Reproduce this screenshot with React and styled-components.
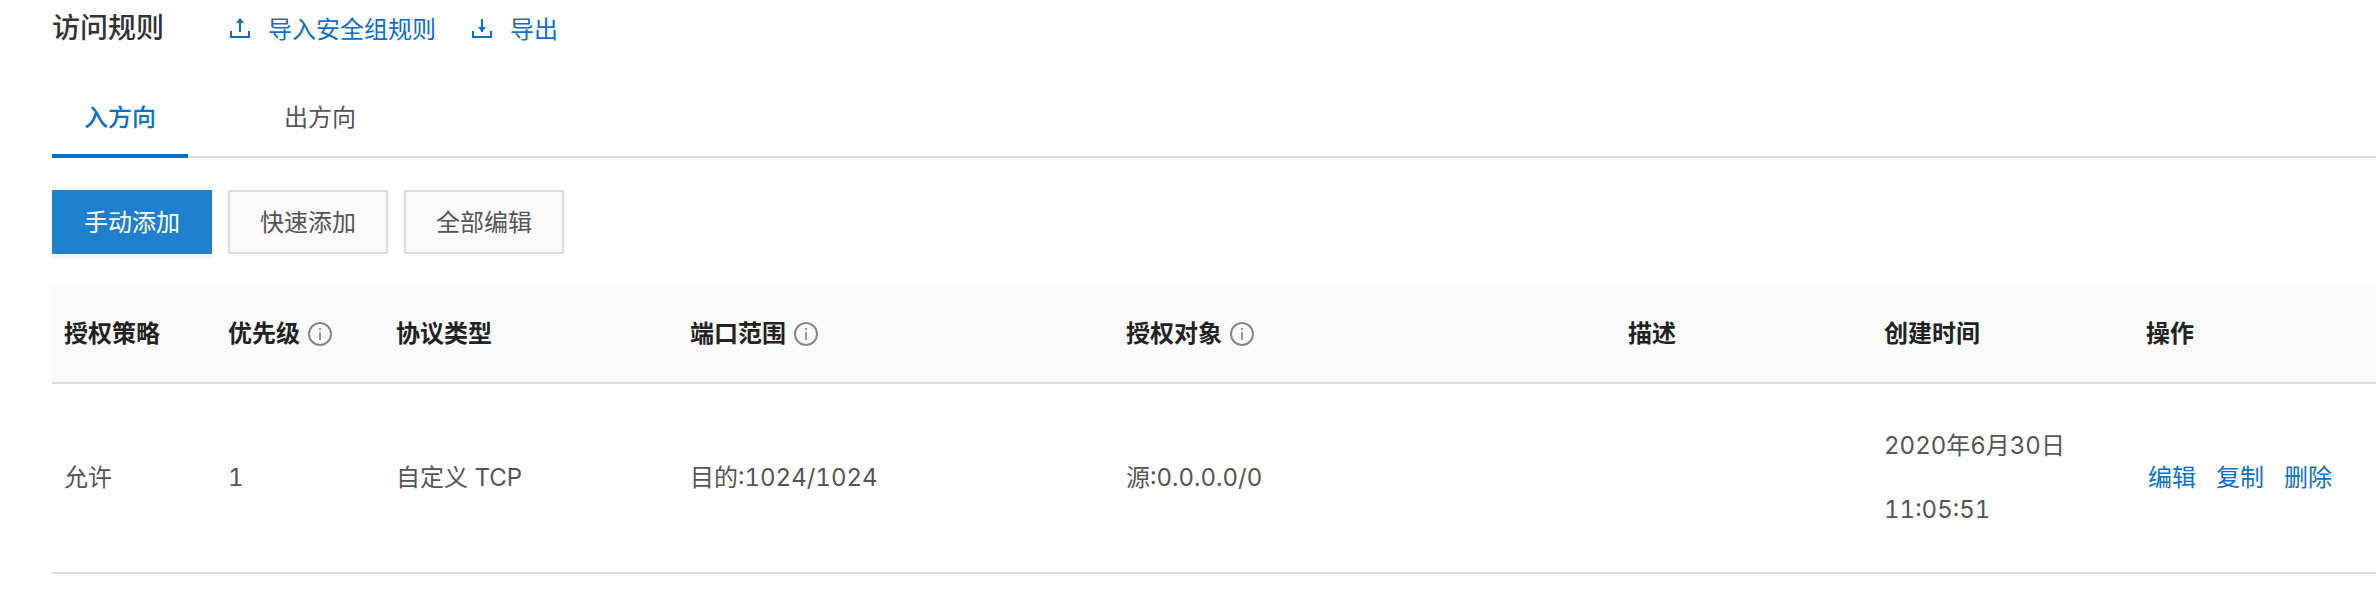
import React, { useState } from "react";
import styled, { createGlobalStyle } from "styled-components";

const blue = "#0a70cc";
const line = "#dedede";

const GlobalStyle = createGlobalStyle`
  *, *::before, *::after { box-sizing: border-box; }
  body {
    margin: 0;
    background: #fff;
    color: #555;
    font-family: Inter, "Noto Sans CJK SC", sans-serif;
    font-size: 24px;
    line-height: 32px;
  }
  button { font: inherit; cursor: pointer; }
`;

const Page = styled.main`
  padding-left: 52px;
`;

const Header = styled.header`
  display: flex;
  align-items: center;
  gap: 64px;
  height: 56px;
`;

const Title = styled.h1`
  margin: 0;
  color: #333;
  font-size: 28px;
  font-weight: 500;
`;

const HeaderLinks = styled.nav`
  display: flex;
  gap: 34px;
  padding-top: 4px;
`;

const IconLink = styled.a`
  display: flex;
  align-items: center;
  gap: 16px;
  color: ${blue};
  text-decoration: none;
`;

const Tabs = styled.div`
  display: flex;
  gap: 64px;
  margin-top: 22px;
  box-shadow: inset 0 -2px ${line};
`;

const Tab = styled.button`
  height: 80px;
  padding: 4px 32px 0;
  border: 0;
  border-bottom: 4px solid ${(p) => (p.$active ? blue : "transparent")};
  background: none;
  color: ${(p) => (p.$active ? blue : "#555")};
  font-weight: ${(p) => (p.$active ? 500 : 400)};
`;

const Toolbar = styled.div`
  display: flex;
  gap: 16px;
  margin: 32px 0;
`;

const Button = styled.button`
  height: 64px;
  padding: 2px 30px 0;
  border: 2px solid ${(p) => (p.$primary ? "#1f80d0" : line)};
  background: ${(p) => (p.$primary ? "#1f80d0" : "#fafafa")};
  color: ${(p) => (p.$primary ? "#fff" : "#555")};
  box-shadow: 0 4px rgba(0, 0, 0, ${(p) => (p.$primary ? 0.04 : 0.01)});
`;

const Table = styled.table`
  width: 100%;
  table-layout: fixed;
  border-collapse: separate;
  border-spacing: 0;
  font-variant-numeric: tabular-nums;
`;

const Col = styled.col`
  width: ${(p) => p.$width};
`;

const HeadCell = styled.th`
  height: 98px;
  padding: 0 12px;
  border-bottom: 2px solid ${line};
  background: #fafafa;
  color: #222;
  font-weight: 600;
  text-align: left;
`;

const HeadLabel = styled.span`
  display: flex;
  align-items: center;
  gap: 8px;
`;

const Cell = styled.td`
  height: 190px;
  padding: 0 12px;
  border-bottom: 2px solid ${line};
  line-height: 64px;
`;

const Actions = styled.div`
  display: flex;
  gap: 20px;
  padding-left: 2px;
`;

const ActionLink = styled.a`
  color: ${blue};
  text-decoration: none;
`;

const TransferIcon = ({ head }) => (
  <svg width="24" height="24" viewBox="0 0 24 24" fill="none" aria-hidden="true">
    <path d="M3 13v6h18v-6M12 1v13" stroke="currentColor" strokeWidth="2" />
    <path d={head} fill="currentColor" />
  </svg>
);

const InfoIcon = () => (
  <svg width="24" height="24" viewBox="0 0 24 24" fill="none" aria-hidden="true">
    <circle cx="12" cy="12" r="11" stroke="#888" strokeWidth="2" />
    <path d="M12 10v8M12 6v2" stroke="#999" strokeWidth="2" />
  </svg>
);

const columns = [
  { label: "授权策略", width: "164px" },
  { label: "优先级", width: "168px", info: true },
  { label: "协议类型", width: "294px" },
  { label: "端口范围", width: "436px", info: true },
  { label: "授权对象", width: "auto", info: true },
  { label: "描述", width: "256px" },
  { label: "创建时间", width: "262px" },
  { label: "操作", width: "242px" },
];

const rules = [
  ["允许", "1", "自定义 TCP", "目的:1024/1024", "源:0.0.0.0/0", "", "2020年6月30日 11:05:51"],
];

export default function App() {
  const [tab, setTab] = useState("入方向");
  return (
    <>
      <GlobalStyle />
      <Page>
        <Header>
          <Title>访问规则</Title>
          <HeaderLinks>
            <IconLink href="#import">
              <TransferIcon head="M8 5l4-5 4 5z" />
              导入安全组规则
            </IconLink>
            <IconLink href="#export">
              <TransferIcon head="M8 9l4 5 4-5z" />
              导出
            </IconLink>
          </HeaderLinks>
        </Header>
        <Tabs role="tablist">
          {["入方向", "出方向"].map((name) => (
            <Tab
              key={name}
              role="tab"
              aria-selected={tab === name}
              $active={tab === name}
              onClick={() => setTab(name)}
            >
              {name}
            </Tab>
          ))}
        </Tabs>
        <Toolbar>
          <Button $primary>手动添加</Button>
          <Button>快速添加</Button>
          <Button>全部编辑</Button>
        </Toolbar>
        <Table>
          <colgroup>
            {columns.map((c) => (
              <Col key={c.label} $width={c.width} />
            ))}
          </colgroup>
          <thead>
            <tr>
              {columns.map((c) => (
                <HeadCell key={c.label} scope="col">
                  <HeadLabel>
                    {c.label}
                    {c.info && <InfoIcon />}
                  </HeadLabel>
                </HeadCell>
              ))}
            </tr>
          </thead>
          <tbody>
            {rules.map((rule, i) => (
              <tr key={i}>
                {rule.map((value, j) => (
                  <Cell key={j}>{value}</Cell>
                ))}
                <Cell>
                  <Actions>
                    <ActionLink href="#edit">编辑</ActionLink>
                    <ActionLink href="#copy">复制</ActionLink>
                    <ActionLink href="#delete">删除</ActionLink>
                  </Actions>
                </Cell>
              </tr>
            ))}
          </tbody>
        </Table>
      </Page>
    </>
  );
}
